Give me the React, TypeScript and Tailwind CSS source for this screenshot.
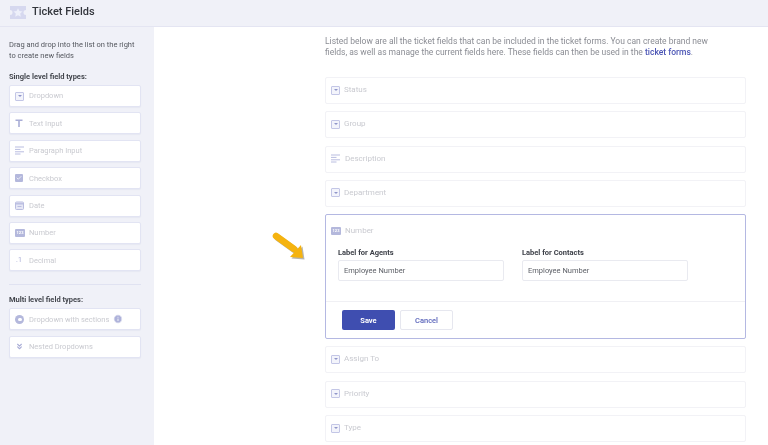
import { Check, ChevronsDown, Info } from 'lucide-react';
import type { ReactNode } from 'react';

const ICON = '#b9bde0';

function DropdownIcon() {
    return (
        <span className="w-[9px] h-[9px] shrink-0 border border-[#c3c6e6] rounded-[1px] bg-[#f3f4fb] flex items-center justify-center">
            <span className="w-0 h-0 border-x-[2px] border-x-transparent border-t-[2px] border-t-[#9095ca]" />
        </span>
    );
}

function TextIcon() {
    return (
        <svg width="8" height="8" viewBox="0 0 8 8" className="shrink-0">
            <path d="M0.5 1.2h7M4 1.2v6.8" stroke="#a9add6" strokeWidth="1.6" fill="none" />
        </svg>
    );
}

function ParagraphIcon() {
    return (
        <svg width="10" height="9" viewBox="0 0 10 9" className="shrink-0">
            <path d="M0 1h9M0 3.4h5.5M0 5.8h9M0 8h5.5" stroke={ICON} strokeWidth="1" />
        </svg>
    );
}

function CheckboxIcon() {
    return (
        <span className="w-2 h-2 shrink-0 rounded-[1px] bg-[#b4b8dc] flex items-center justify-center">
            <Check size={6} color="#fff" strokeWidth={3} />
        </span>
    );
}

function DateIcon() {
    return (
        <svg width="9" height="9" viewBox="0 0 9 9" className="shrink-0">
            <rect x="0.5" y="1" width="8" height="7.5" rx="1" fill="#e6e7f5" stroke={ICON} />
            <path d="M0.5 2.8h8" stroke={ICON} strokeWidth="1.4" />
            <path d="M2.5 5.5h4" stroke={ICON} />
        </svg>
    );
}

function NumberIcon() {
    return (
        <span className="w-[10px] h-2 shrink-0 rounded-[1px] bg-[#b4b8dc] text-white text-[4px] leading-2 text-center font-bold">
            123
        </span>
    );
}

function DecimalIcon() {
    return <span className="w-2 shrink-0 text-[7px] leading-none text-[#a9add6] text-center">.1</span>;
}

function SectionsIcon() {
    return (
        <span className="w-[9px] h-[9px] shrink-0 rounded-full bg-[#b4b8dc] flex items-center justify-center">
            <span className="w-[4px] h-[3px] rounded-full bg-white" />
        </span>
    );
}

function SideCard({ icon, label, extra }: { icon: ReactNode; label: string; extra?: ReactNode }) {
    return (
        <div className="h-[22px] bg-white border border-[#e2e4f3] rounded-[2px] flex items-center pl-[5px] shadow-[0_1px_1px_rgba(90,95,160,0.06)]">
            <span className="w-[14px] shrink-0 flex justify-start">{icon}</span>
            <span className="text-[7.5px] text-[#c9cad0] whitespace-nowrap">{label}</span>
            {extra}
        </div>
    );
}

function FieldRow({ icon, label }: { icon?: ReactNode; label: string }) {
    return (
        <div className="h-[27px] shrink-0 bg-white border border-[#f2f2f6] rounded-[2px] flex items-center pl-[5px] pb-[1px] gap-[4px]">
            {icon ?? <DropdownIcon />}
            <span className="text-[8px] text-[#c9cad0]">{label}</span>
        </div>
    );
}

function LabelInput({ label }: { label: string }) {
    return (
        <div className="w-[166px]">
            <div className="text-[7.5px] font-bold text-[#3e4149] leading-[9px] mb-[3px]">{label}</div>
            <div className="h-[21px] border border-[#e9eaf0] rounded-[2px] flex items-center pl-[5px] text-[7.5px] text-[#5c5f66]">
                Employee Number
            </div>
        </div>
    );
}

export default function App() {
    return (
        <div className="w-[768px] h-[445px] overflow-hidden bg-white font-['Roboto',sans-serif] flex flex-col blur-[0.35px]">
            {/* Header */}
            <div className="h-[27px] shrink-0 bg-[#f0f1f8] border-b border-[#e4e5f2] flex items-center pl-[10px] pb-[2px] gap-[6px]">
                <svg width="16" height="13" viewBox="0 0 16 13" className="shrink-0">
                    <path d="M0 0h16v4a2.5 2.5 0 0 0 0 5v4H0V9a2.5 2.5 0 0 0 0-5z" fill="#d6d8ef" />
                    <path d="M8 2.2l1.4 2.9 3.1.4-2.3 2.1.6 3.1L8 9.2l-2.8 1.5.6-3.1-2.3-2.1 3.1-.4z" fill="#eef0fa" />
                </svg>
                <span className="text-[11px] font-medium text-[#33363d]">Ticket Fields</span>
            </div>

            <div className="flex flex-1 min-h-0">
                {/* Sidebar */}
                <aside className="w-[154px] shrink-0 bg-[#f0f1f8] pl-[9px] pr-[13px] pt-[12px]">
                    <p className="text-[7.5px] leading-[11px] text-[#55585f]">
                        Drag and drop into the list on the right to create new fields
                    </p>
                    <h4 className="text-[7.5px] font-bold text-[#44474e] leading-[9px] mt-[11px] mb-[4px]">Single level field types:</h4>
                    <div className="flex flex-col gap-[5.4px]">
                        <SideCard icon={<DropdownIcon />} label="Dropdown" />
                        <SideCard icon={<TextIcon />} label="Text Input" />
                        <SideCard icon={<ParagraphIcon />} label="Paragraph Input" />
                        <SideCard icon={<CheckboxIcon />} label="Checkbox" />
                        <SideCard icon={<DateIcon />} label="Date" />
                        <SideCard icon={<NumberIcon />} label="Number" />
                        <SideCard icon={<DecimalIcon />} label="Decimal" />
                    </div>
                    <div className="h-px bg-[#e0e2f1] mt-[13px] mb-[10px]" />
                    <h4 className="text-[7.5px] font-bold text-[#44474e] leading-[9px] mb-[4px]">Multi level field types:</h4>
                    <div className="flex flex-col gap-[5.4px]">
                        <SideCard
                            icon={<SectionsIcon />}
                            label="Dropdown with sections"
                            extra={
                                <span className="ml-[4px]">
                                    <Info size={10} fill="#aeb2da" color="#fff" />
                                </span>
                            }
                        />
                        <SideCard icon={<ChevronsDown size={9} color="#a9add6" strokeWidth={3} />} label="Nested Dropdowns" />
                    </div>
                </aside>

                {/* Main */}
                <main className="flex-1 min-w-0 pl-[171px] pr-[22px] pt-[9px] relative">
                    <p className="text-[8.5px] leading-[11px] text-[#8b8d94] w-[400px] whitespace-nowrap">
                        Listed below are all the ticket fields that can be included in the ticket forms. You can create brand new
                        <br />
                        fields, as well as manage the current fields here. These fields can then be used in the{' '}
                        <span className="font-medium text-[#4b55b5]">ticket forms</span>.
                    </p>
                    <div className="flex flex-col gap-[7.3px] mt-[19px]">
                        <FieldRow label="Status" />
                        <FieldRow label="Group" />
                        <FieldRow icon={<ParagraphIcon />} label="Description" />
                        <FieldRow label="Department" />

                        {/* Expanded field */}
                        <div className="h-[125px] shrink-0 border border-[#b4b8e2] rounded-[2px] flex flex-col">
                            <div className="flex items-center pl-[5px] gap-[4px] pt-[11px]">
                                <NumberIcon />
                                <span className="text-[8px] leading-[9px] text-[#c9cad0]">Number</span>
                            </div>
                            <div className="flex gap-[18px] pl-[12px] mt-[13px]">
                                <LabelInput label="Label for Agents" />
                                <LabelInput label="Label for Contacts" />
                            </div>
                            <div className="mt-[20px] flex-1 border-t border-[#f0f0f4] flex items-center pl-[16px] gap-[5px]">
                                <button className="w-[53px] h-[20px] bg-[#3f4eb0] rounded-[2px] text-white text-[7.5px] font-bold">Save</button>
                                <button className="w-[53px] h-[20px] bg-white border border-[#e6e7ef] rounded-[2px] text-[#5a64ba] text-[7.5px] font-medium">Cancel</button>
                            </div>
                        </div>

                        <FieldRow label="Assign To" />
                        <FieldRow label="Priority" />
                        <FieldRow label="Type" />
                    </div>

                    {/* Annotation arrow */}
                    <svg width="36" height="30" viewBox="0 0 36 30" className="absolute left-[118px] top-[204px]">
                        <g transform="translate(1.5 1.5)" fill="#5f5a4a" fillOpacity="0.45" stroke="#5f5a4a" strokeOpacity="0.45">
                            <path d="M4 5 L22 18" strokeWidth="6.5" strokeLinecap="round" fill="none" />
                            <path d="M29 14 L31 27 L18 26 Z" stroke="none" />
                        </g>
                        <path d="M4 5 L22 18" stroke="#f5b30f" strokeWidth="6.5" strokeLinecap="round" fill="none" />
                        <path d="M29 14 L31 27 L18 26 Z" fill="#f5b30f" />
                    </svg>
                </main>
            </div>
        </div>
    );
}
